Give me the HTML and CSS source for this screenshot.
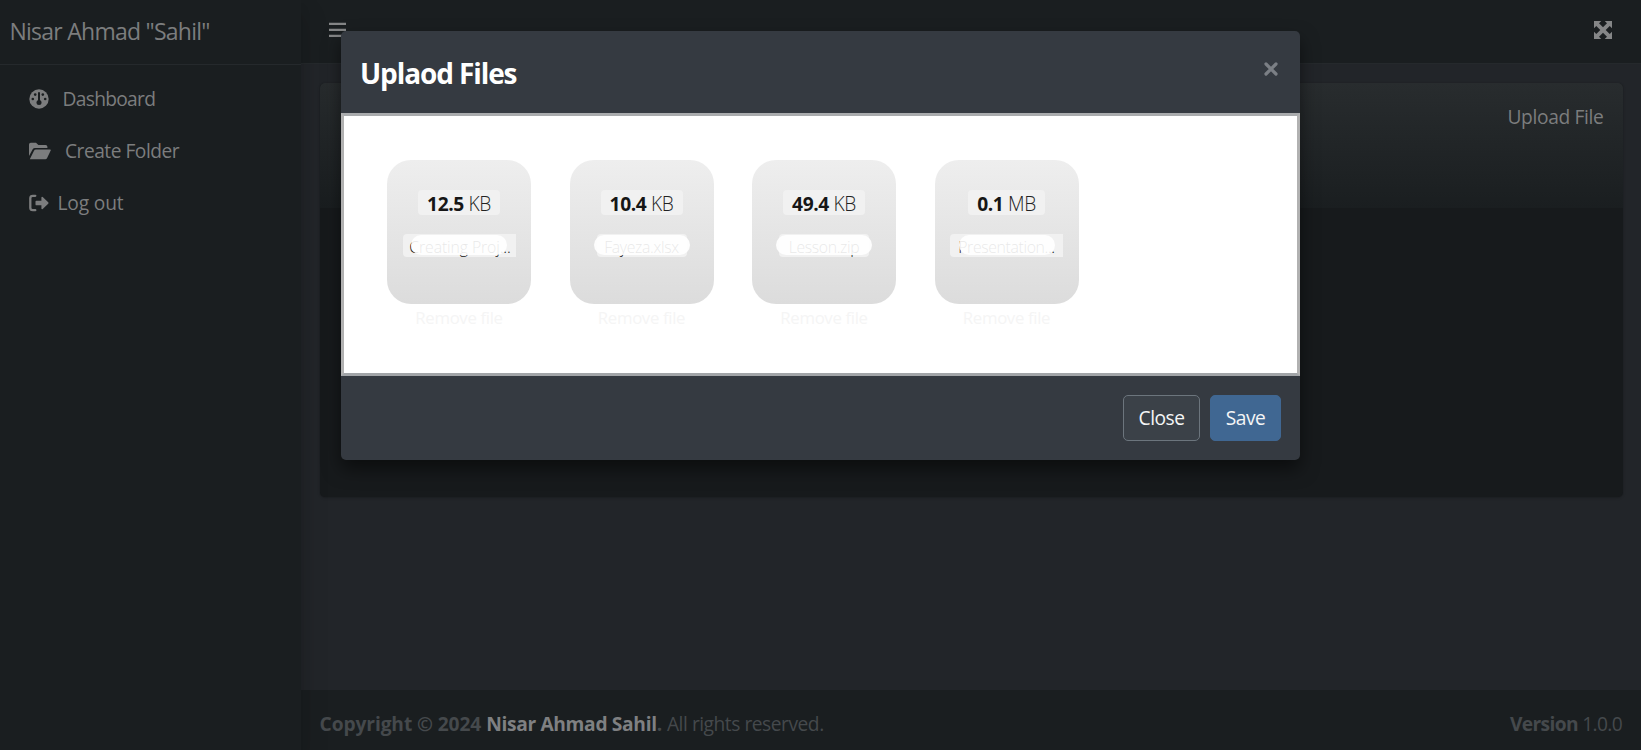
FILE: index.html
```html
<!DOCTYPE html>
<html lang="en">
<head>
<meta charset="utf-8">
<title>Dashboard</title>
<link rel="stylesheet" href="styles.css">
</head>
<body>
<div class="app">
  <aside class="sidebar">
    <div class="brand"><span>Nisar Ahmad "Sahil"</span></div>
    <nav class="menu">
      <a class="item dash"><svg width="20" height="20" viewBox="0 0 20 20"><circle cx="10" cy="10" r="9.7" fill="currentColor"/><g fill="#1a1e20"><circle cx="10" cy="13.5" r="2.5"/><rect x="9" y="3" width="2" height="10" rx="1"/><circle cx="6.2" cy="5.6" r="1.3"/><circle cx="13.8" cy="5.6" r="1.3"/><circle cx="3.8" cy="10" r="1.3"/><circle cx="16.2" cy="10" r="1.3"/></g></svg><span>Dashboard</span></a>
      <a class="item folder"><svg width="22" height="18" viewBox="0 0 22 18"><path fill="currentColor" d="M0 14V2.5Q0 .7 1.8.7H7L9.4 3h7.2q1.8 0 1.8 1.8V6H6Q4.5 6 3.7 7.3ZM.8 17.3 5 8.7Q5.5 7.4 7 7.4H21q1.2 0 .7 1.2L18 16.2q-.5 1.1-1.7 1.1Z"/></svg><span>Create Folder</span></a>
      <a class="item logout"><svg width="20" height="18" viewBox="0 0 20 18"><path fill="none" stroke="currentColor" stroke-width="2.3" stroke-linecap="round" d="M6.3 1.8H3.8Q1.3 1.8 1.3 4.2v9.6q0 2.4 2.5 2.4h2.5"/><path fill="currentColor" d="M7.4 6.7h5V3.4q.2-1.2 1.3-.5L19.2 8.2q.8.8 0 1.6l-5.5 5.3q-1.1.7-1.3-.5v-3.3h-5q-.9 0-.9-.9V7.6q0-.9.9-.9Z"/></svg><span>Log out</span></a>
    </nav>
  </aside>
  <div class="page">
    <header class="topbar">
      <svg class="bars" width="17" height="16" viewBox="0 0 17 16"><path stroke="currentColor" stroke-width="2.2" d="M0 1.8h17M0 7.8h17M0 13.8h17"/></svg>
      <svg width="18" height="18" viewBox="0 0 18 18"><path fill="currentColor" d="M0 0h7.300L5 2.300 9 6.300l4-4L10.700 0H18v7.300L15.700 5l-4 4 4 4L18 10.700V18h-7.300L13 15.700l-4-4-4 4L7.300 18H0v-7.300L2.300 13l4-4-4-4L0 7.300Z"/></svg>
    </header>
    <main class="content">
      <section class="card">
        <div class="card-head"><span class="upload">Upload File</span></div>
      </section>
    </main>
    <footer class="footer">
      <span class="copy"><b>Copyright © 2024 <i>Nisar Ahmad Sahil</i>.</b> <span class="rights">All rights reserved.</span></span>
      <span class="ver"><b>Version</b> 1.0.0</span>
    </footer>
  </div>
</div>
<div class="modal">
  <div class="modal-head">
    <h4>Uplaod Files</h4>
    <svg class="x" width="14" height="14" viewBox="0 0 14 14"><path stroke="currentColor" stroke-width="3.2" stroke-linecap="round" d="m2 2 10 10M12 2 2 12"/></svg>
  </div>
  <div class="dropzone">
    <div class="file"><div class="tile"><div class="size"><b>12.5</b> KB</div><div class="name cut n1"><span>Creating Proj...</span></div><div class="bar"></div></div><a>Remove file</a></div>
    <div class="file"><div class="tile"><div class="size"><b>10.4</b> KB</div><div class="name n2"><span>Fayeza.xlsx</span></div><div class="bar"></div></div><a>Remove file</a></div>
    <div class="file"><div class="tile"><div class="size"><b>49.4</b> KB</div><div class="name n3"><span>Lesson.zip</span></div><div class="bar"></div></div><a>Remove file</a></div>
    <div class="file"><div class="tile"><div class="size mb"><b>0.1</b> MB</div><div class="name cut n4"><span>Presentation...</span></div><div class="bar"></div></div><a>Remove file</a></div>
  </div>
  <div class="modal-foot"><button class="close">Close</button><button class="save">Save</button></div>
</div>
</body>
</html>
```
FILE: styles.css
```css
* { box-sizing: border-box; }
body {
  margin: 0;
  height: 750px;
  overflow: hidden;
  position: relative;
  background: #222529;
  color: #7c7d7e;
  font: 19.2px/28.8px "Open Sans", "Noto Sans", sans-serif;
  letter-spacing: -0.7px;
  white-space: nowrap;
}
svg { display: block; flex: none; }
.app { display: flex; height: 750px; }
.sidebar {
  position: relative;
  z-index: 1;
  width: 300.5px;
  flex: none;
  background: #1a1e20;
  box-shadow: 0 14px 28px rgba(0,0,0,.14), 0 10px 10px rgba(0,0,0,.1);
}
.brand {
  height: 65px;
  padding: 17px 9.5px;
  border-bottom: 1px solid #25292c;
  font-size: 23px;
  letter-spacing: -0.75px;
}
.menu { padding: 10px 28.5px; }
.item { display: flex; align-items: center; height: 48px; margin-bottom: 4px; }
.item svg { color: #7c7d7e; }
.dash span { margin-left: 14px; }
.folder span { margin-left: 14.5px; letter-spacing: -0.5px; }
.logout span { margin-left: 9px; letter-spacing: -0.15px; }
.page { flex: 1; display: flex; flex-direction: column; }
.topbar {
  height: 64px;
  display: flex;
  justify-content: space-between;
  padding: 21px 29.5px 0 28.5px;
  background: #1a1e20;
  border-bottom: 1px solid #25292c;
}
.topbar svg { color: #858687; }
.topbar .bars { margin-top: 1px; }
.content { flex: 1; padding: 19px 18.5px 0 19px; }
.card {
  height: 413.5px;
  border-radius: 5px;
  background: #171a1c;
  box-shadow: 0 0 1px rgba(0,0,0,.15), 0 1px 3px rgba(0,0,0,.2);
}
.card-head {
  height: 125px;
  padding: 20px 19px;
  text-align: right;
  letter-spacing: -0.35px;
  border-radius: 5px 5px 0 0;
  background: linear-gradient(#282c2e, #1a1e20);
}
.footer {
  height: 60px;
  display: flex;
  justify-content: space-between;
  padding: 19.5px 19px 0 19px;
  background: #1a1e20;
  color: #45494c;
}
.footer i { font-style: normal; color: #7f8082; letter-spacing: -0.33px; }
.copy { letter-spacing: -0.1px; }
.rights { letter-spacing: -0.47px; }
.ver { letter-spacing: -0.65px; }
.modal {
  position: absolute;
  z-index: 2;
  left: 341px;
  top: 31px;
  width: 959px;
  height: 429px;
  border-radius: 5px;
  background: #353a41;
  box-shadow: 0 9px 18px rgba(0,0,0,.5);
  color: #fff;
}
.modal-head {
  height: 82px;
  display: flex;
  justify-content: space-between;
  padding: 28px 22.5px 0 19px;
}
h4 { margin: 0; font-size: 28px; line-height: 28px; font-weight: 700; letter-spacing: -1.1px; }
.x { color: #7b7f85; margin-top: 2.5px; }
.dropzone {
  height: 263px;
  display: flex;
  gap: 38.5px;
  padding: 44px 43px;
  border: 3px solid #b1b1b1;
  border-top-color: #a9abad;
  border-bottom-color: #a2a5a8;
  background: #fff;
}
.file { width: 144px; text-align: center; color: #f5f5f5; letter-spacing: -0.35px; }
.file a { display: block; font-size: 16.8px; line-height: 27px; }
.tile {
  position: relative;
  height: 144px;
  padding-top: 30px;
  border-radius: 24px;
  background: linear-gradient(#eee, #dcdcdc);
  display: flex;
  flex-direction: column;
  align-items: center;
}
.size {
  width: 82px;
  height: 25px;
  line-height: 27px;
  border-radius: 4px;
  background: #f1f1f1;
  color: #222;
  font-size: 19.2px;
  font-weight: 300;
  letter-spacing: -0.4px;
}
.size b { color: #161616; font-weight: 700; }
.mb { width: 77px; }
.name {
  width: 90px;
  height: 23px;
  margin-top: 19px;
  line-height: 26px;
  border-radius: 4px;
  background: #f1f1f1;
  color: #111;
  font-size: 15.8px;
  font-weight: 300;
}
.cut { width: 113px; border-radius: 4px 0 0 4px; }
.n1 { letter-spacing: -0.1px; padding-left: 2px; }
/* Upload progress pill, laid over the file name */
.bar {
  position: absolute;
  left: 24px;
  top: 75px;
  width: 96px;
  height: 20px;
  border-radius: 10px;
  background: rgba(255,255,255,.9);
}
.modal-foot {
  height: 84px;
  display: flex;
  justify-content: flex-end;
  gap: 10px;
  padding: 19px 19px;
}
button {
  height: 46px;
  padding: 0;
  border-radius: 5px;
  font: inherit;
  letter-spacing: -0.5px;
  color: #f4f5f6;
}
.close { width: 77px; background: #3b4148; border: 1px solid #6c757d; }
.save { width: 71px; background: #406792; border: 1px solid #406792; }
```
